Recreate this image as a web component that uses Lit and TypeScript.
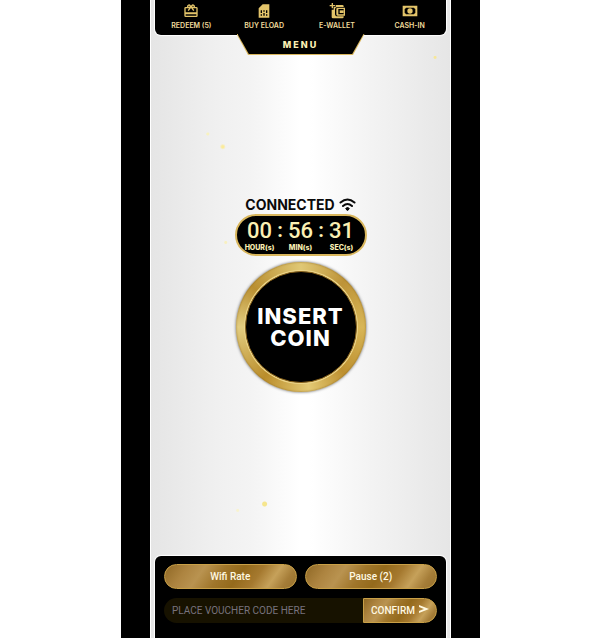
import { LitElement, html, css, svg } from "lit";
import { customElement, state } from "lit/decorators.js";

const gift = svg`<path fill-rule="evenodd" d="M20 6h-2.200c.1-.3.2-.7.2-1a3 3 0 0 0-5.500-1.600L12 4l-.500-.700A3 3 0 0 0 6 5c0 .4.100.700.200 1H4a2 2 0 0 0-2 2v11a2 2 0 0 0 2 2h16a2 2 0 0 0 2-2V8a2 2 0 0 0-2-2zm-5-2a1 1 0 1 1 0 2 1 1 0 0 1 0-2zM9 4a1 1 0 1 1 0 2 1 1 0 0 1 0-2zm11 15H4v-2h16zm0-5H4V8h5.100L7 10.800 8.600 12 12 7.400 15.400 12l1.600-1.200L14.900 8H20z"/>`;
const sim = svg`<path fill-rule="evenodd" d="M20 2H10L4 8v14h16zM9 19H7v-2h2zm8 0h-2v-2h2zm-8-4H7v-4h2zm4 4h-2v-4h2zm0-6h-2v-2h2zm4 2h-2v-4h2z"/>`;
const wallet = svg`<path d="M4 0h2v3h3v2H6v3H4V5H1V3h3zM10 3h10a2 2 0 0 1 2 2v1h-9a4 4 0 0 0-4 4v6a4 4 0 0 0 4 4h9v1a2 2 0 0 1-2 2H6a2 2 0 0 1-2-2V10h3V6h3z"/><path fill-rule="evenodd" d="M13 7h11v12H13a2 2 0 0 1-2-2V9c0-1.100.900-2 2-2zm1 2v8h8V9z"/><path d="M16 11h6v4h-6z"/>`;
const cash = svg`<path fill-rule="evenodd" d="M1 4h22v16H1zM6 7a3 3 0 0 1-2 2v6a3 3 0 0 1 2 2h12a3 3 0 0 1 2-2V9a3 3 0 0 1-2-2z"/><circle cx="12" cy="12" r="4"/>`;

@customElement("app-root")
export class AppRoot extends LitElement {
  @state() private voucher = "";

  private actions = [
    { label: "REDEEM (5)", icon: gift },
    { label: "BUY ELOAD", icon: sim },
    { label: "E-WALLET", icon: wallet },
    { label: "CASH-IN", icon: cash },
  ];

  private time = [
    { value: "00", unit: "HOUR(s)" },
    { value: "56", unit: "MIN(s)" },
    { value: "31", unit: "SEC(s)" },
  ];

  static styles = css`
    :host {
      display: block;
      min-height: 100vh;
      background: #fff;
      font-family: Roboto, "Liberation Sans", sans-serif;
      --cream: #fbf0b4;
      --gold: #d9b65c;
    }
    * { box-sizing: border-box; }
    button, input {
      font: inherit;
      margin: 0;
      padding: 0;
      border: 0;
      background: none;
      color: inherit;
    }
    button { cursor: pointer; }
    .frame {
      min-height: 100vh;
      margin: 0 20% 0 calc(20% + 1px);
      padding: 0 29px;
      background: #000;
      display: flex;
    }
    .screen {
      flex: 1;
      min-width: 0;
      display: flex;
      flex-direction: column;
      padding: 0 4px;
      border: solid #fff;
      border-width: 0 1px;
      background:
        radial-gradient(circle at 24% 23%, #fbeb9a 1px, transparent 3px),
        radial-gradient(circle at 19% 21%, #f8f2c0 1px, transparent 2px),
        radial-gradient(circle at 38% 79%, #f6e68e 2px, transparent 3px),
        radial-gradient(circle at 29% 80%, #f8f3cf 1px, transparent 2px),
        radial-gradient(circle at 95% 9%, #f6e79a 1px, transparent 2px),
        radial-gradient(circle at 25% 38%, #f8f0c0 1px, transparent 2px),
        linear-gradient(90deg, #e5e5e5, #f0f0f0 22%, #f4f4f4 34%, #fff 50%, #fff 53%, #f4f4f4 72%, #e6e6e6);
    }
    .top {
      display: flex;
      justify-content: space-around;
      height: 35px;
      padding-top: 3px;
      background: #000;
      border-radius: 0 0 6px 6px;
      box-shadow: 0 0 1px 1px #fff;
    }
    .action {
      flex: 1;
      display: flex;
      flex-direction: column;
      align-items: center;
      gap: 1px;
      color: #f0dc9c;
      font: 600 7px/12px Inter, sans-serif;
    }
    .action svg { width: 18px; height: 16px; fill: #e3c46a; }
    .menu {
      position: relative;
      align-self: center;
      width: 128px;
      height: 21px;
      margin-top: -1px;
      background: var(--gold);
      clip-path: polygon(0 0, 100% 0, 91% 100%, 9% 100%);
      color: var(--cream);
      font: 800 9px/20px Inter, sans-serif;
      letter-spacing: 2px;
    }
    .menu::before {
      content: "";
      position: absolute;
      inset: 0 1px 1px;
      background: #000;
      clip-path: polygon(0 0, 100% 0, 91% 100%, 9% 100%);
    }
    .menu span { position: relative; }
    main {
      flex: 1;
      display: flex;
      flex-direction: column;
      align-items: center;
      justify-content: center;
      padding-bottom: 24px;
    }
    .status {
      display: flex;
      align-items: center;
      gap: 4px;
      margin: 0;
      color: #0a0a0a;
      font: 700 14px/18px Inter, sans-serif;
    }
    .status svg { width: 17px; height: 14px; }
    .timer {
      display: flex;
      justify-content: center;
      width: 132px;
      height: 42px;
      padding-top: 2px;
      border: 2px solid var(--gold);
      border-radius: 21px;
      background: #000;
      color: var(--cream);
    }
    .part {
      display: flex;
      flex-direction: column;
      align-items: center;
      width: 32px;
    }
    .value { font: 500 22px/25px Roboto, sans-serif; }
    .unit { font: 800 7px/9px Inter, sans-serif; white-space: nowrap; }
    .colon { width: 9px; text-align: center; font: 700 20px/24px Roboto, sans-serif; }
    .coin {
      width: 130px;
      height: 130px;
      margin-top: 6px;
      padding: 9px;
      border-radius: 50%;
      background: conic-gradient(#e0c875, #bd9338 12%, #d8b657 25%, #bd9030 38%, #e3c974 48%, #ba8d2b 60%, #e3cd80 75%, #b98f31 86%, #e0c875);
      box-shadow: inset 0 0 2px #8d681c, 0 0 3px #555;
    }
    .face {
      display: flex;
      flex-direction: column;
      align-items: center;
      justify-content: center;
      height: 100%;
      border: 1px solid #8b641b;
      border-radius: 50%;
      background: #000;
      box-shadow: 0 0 0 1px #ecd58a;
      color: #fff;
      font: 800 22px/22px Inter, sans-serif;
      letter-spacing: 1px;
    }
    .bottom {
      display: grid;
      gap: 9px;
      padding: 8px 9px 15px;
      border-radius: 6px 6px 0 0;
      background: #000;
      box-shadow: 0 0 1px 1px #fff;
    }
    .row { display: flex; gap: 8px; }
    .voucher { display: flex; }
    .gold {
      height: 25px;
      border: 1px solid #c9a047;
      border-radius: 13px;
      background: linear-gradient(125deg, #8f6825, #ad8440 16%, #b99350 28%, #a0762b 42%, #946a1c 55%, #a5792f 68%, #c6a15a 80%, #a57d38 90%, #96702c);
      color: #fff9e2;
      font-size: 10px;
      font-weight: 500;
      line-height: 12px;
    }
    .row .gold { flex: 1; }
    .code {
      flex: 1;
      min-width: 0;
      height: 25px;
      padding: 0 8px;
      border-radius: 13px 0 0 13px;
      background: #171200;
      color: #d8d4e0;
      font-size: 10px;
    }
    .code::placeholder { color: #77727e; opacity: 1; }
    .confirm {
      display: flex;
      align-items: center;
      justify-content: center;
      gap: 4px;
      width: 74px;
      border-radius: 0 13px 13px 0;
    }
    .confirm svg { width: 10px; height: 12px; fill: #fff9e2; }
  `;

  private onInput(e: Event) {
    this.voucher = (e.target as HTMLInputElement).value;
  }

  render() {
    return html`
      <div class="frame">
        <div class="screen">
          <nav class="top">
            ${this.actions.map(
              (a) => html`<button class="action">
                <svg viewBox="0 0 24 24" aria-hidden="true">${a.icon}</svg>
                <span>${a.label}</span>
              </button>`
            )}
          </nav>
          <button class="menu"><span>MENU</span></button>
          <main>
            <h1 class="status">
              CONNECTED
              <svg viewBox="0 0 17 14" fill="none" stroke="#0a0a0a" stroke-width="2" stroke-linecap="round" aria-hidden="true">
                <path d="M1.500 4.500Q8.500-1.500 15.500 4.500M4 8Q8.500 4 13 8" />
                <path d="M6 10h5l-2.500 3z" fill="#0a0a0a" stroke="none" />
                <circle cx="8.500" cy="10.800" r="1" stroke-width="1.500" />
              </svg>
            </h1>
            <div class="timer" role="timer">
              ${this.time.map(
                (t, i) => html`${i ? html`<span class="colon">:</span>` : ""}
                  <div class="part">
                    <span class="value">${t.value}</span>
                    <span class="unit">${t.unit}</span>
                  </div>`
              )}
            </div>
            <button class="coin">
              <span class="face"><span>INSERT</span><span>COIN</span></span>
            </button>
          </main>
          <footer class="bottom">
            <div class="row">
              <button class="gold">Wifi Rate</button>
              <button class="gold">Pause (2)</button>
            </div>
            <form class="voucher" @submit=${(e: Event) => e.preventDefault()}>
              <input
                class="code"
                aria-label="Voucher code"
                placeholder="PLACE VOUCHER CODE HERE"
                .value=${this.voucher}
                @input=${this.onInput}
              />
              <button class="gold confirm">
                CONFIRM
                <svg viewBox="0 0 10 12" aria-hidden="true"><path d="M0 0 10 4 0 8V6l5-2-5-2z" /></svg>
              </button>
            </form>
          </footer>
        </div>
      </div>
    `;
  }
}
